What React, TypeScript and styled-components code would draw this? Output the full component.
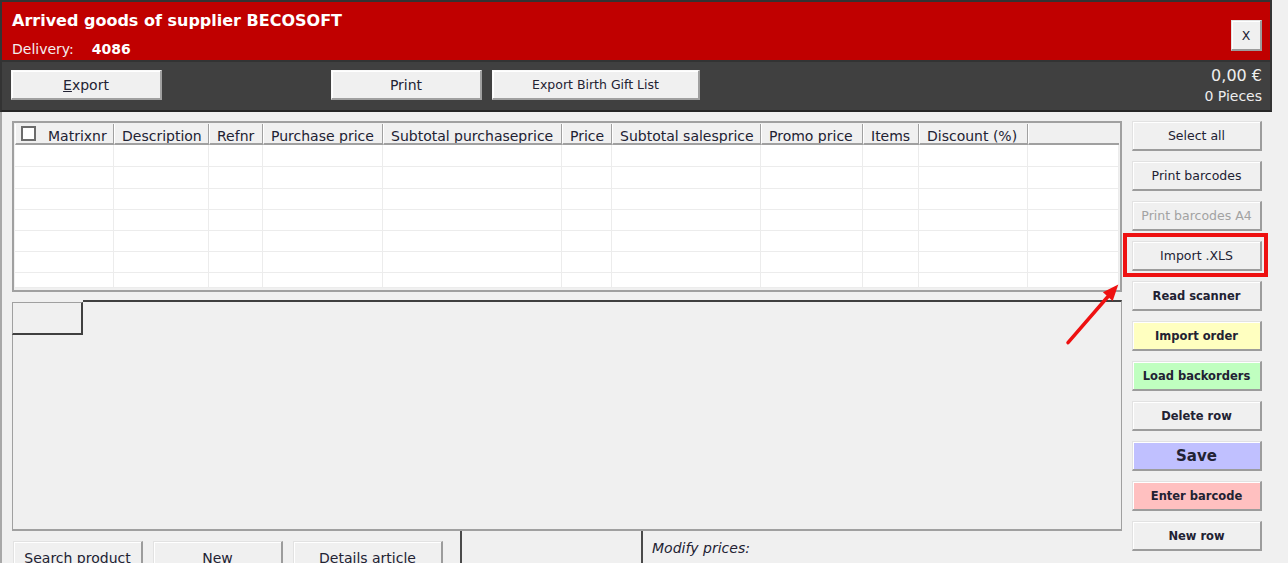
import styled, { createGlobalStyle, css } from "styled-components";

const GlobalStyle = createGlobalStyle`
  html, body {
    margin: 0;
    padding: 0;
    background: #f0f0f0;
    overflow: hidden;
  }
  body {
    font-family: "DejaVu Sans", Verdana, sans-serif;
    color: #222233;
  }
  * {
    box-sizing: border-box;
  }
`;

const Screen = styled.div`
  position: relative;
  width: 1288px;
  height: 563px;
  overflow: hidden;
  background: #f0f0f0;
`;

const Window = styled.div`
  width: 1272px;
  display: flex;
  flex-direction: column;
`;

/* ---------- title bar ---------- */

const TitleBar = styled.header`
  flex: none;
  height: 62px;
  background: #c00000;
  border: 2px solid #333333;
  padding: 9px 8px 0 10px;
  display: flex;
  justify-content: space-between;
  align-items: flex-start;
  color: #ffffff;
`;

const Title = styled.h1`
  margin: 0;
  font-size: 16px;
  line-height: 20px;
  font-weight: bold;
`;

const DeliveryLine = styled.div`
  margin-top: 10px;
  display: flex;
  gap: 18px;
  font-size: 14px;
  line-height: 17px;
  color: #f4eeee;
  & > b {
    color: #ffffff;
  }
`;

const bevel = css`
  background: #f0f0f0;
  border-style: solid;
  border-width: 1px 2px 2px 1px;
  border-color: #e2e2e2 #9c9c9c #9c9c9c #e2e2e2;
  box-shadow: inset 1px 1px 0 #ffffff;
  padding: 0;
  font-family: inherit;
  color: #222233;
  cursor: default;
  white-space: nowrap;
`;

const CloseButton = styled.button`
  ${bevel};
  width: 31px;
  height: 31px;
  margin-top: 9px;
  font-size: 12.5px;
`;

/* ---------- toolbar ---------- */

const Toolbar = styled.div`
  flex: none;
  height: 50px;
  background: #404040;
  border-left: 2px solid #333333;
  border-right: 2px solid #333333;
  border-bottom: 2px solid #262626;
  padding: 0 8px 0 9px;
  display: flex;
  align-items: flex-start;
`;

const ToolButton = styled.button<{ $width: number; $gap?: number; $small?: boolean }>`
  ${bevel};
  border-color: #fafafa #a0a0a0 #a0a0a0 #fafafa;
  width: ${(p) => p.$width}px;
  height: 30px;
  margin-top: 8px;
  margin-left: ${(p) => p.$gap ?? 0}px;
  font-size: ${(p) => (p.$small ? 12.5 : 14)}px;
`;

const Totals = styled.div`
  margin-left: auto;
  margin-top: 4px;
  text-align: right;
  color: #eeeeee;
  & > div:first-child {
    font-size: 16px;
    line-height: 19px;
  }
  & > div:last-child {
    margin-top: 3px;
    font-size: 14px;
    line-height: 17px;
  }
`;

/* ---------- body ---------- */

const Body = styled.div`
  flex: none;
  border-left: 2px solid #a8a8a8;
  padding: 9px 10px 0 10px;
  display: flex;
  align-items: flex-start;
`;

const MainColumn = styled.div`
  width: 1110px;
  display: flex;
  flex-direction: column;
  & > * {
    flex: none;
  }
`;

const SideColumn = styled.div`
  width: 130px;
  margin-left: 10px;
  display: flex;
  flex-direction: column;
  gap: 10px;
`;

/* ---------- grid ---------- */

const columns = [
  { label: "Matrixnr", width: 99 },
  { label: "Description", width: 95 },
  { label: "Refnr", width: 54 },
  { label: "Purchase price", width: 120 },
  { label: "Subtotal purchaseprice", width: 179 },
  { label: "Price", width: 50 },
  { label: "Subtotal salesprice", width: 149 },
  { label: "Promo price", width: 102 },
  { label: "Items", width: 56 },
  { label: "Discount (%)", width: 109 },
  { label: "", width: 91 },
];
const template = columns.map((c) => `${c.width}px`).join(" ");
const rowHeights = [22, 22, 21, 21, 21, 21, 15];

const GridFrame = styled.div`
  height: 171px;
  border: 2px solid #a0a0a0;
  padding: 1px 1px 2px 1px;
  background: #f0f0f0;
`;

const HeaderRow = styled.div`
  display: grid;
  grid-template-columns: ${template};
  height: 21px;
`;

const HeaderCell = styled.div<{ $first?: boolean; $last?: boolean }>`
  display: flex;
  align-items: flex-start;
  gap: 12px;
  padding: ${(p) => (p.$first ? "2px 0 0 5px" : "4px 0 0 7px")};
  border-left: 1px solid #ffffff;
  border-right: ${(p) => (p.$last ? "none" : "1px solid #a0a0a0")};
  border-bottom: 2px solid #a0a0a0;
  font-size: 14px;
  line-height: 16px;
  white-space: nowrap;
  overflow: hidden;
  & > span {
    padding-top: ${(p) => (p.$first ? 2 : 0)}px;
  }
`;

const CheckBox = styled.span`
  flex: none;
  width: 15px;
  height: 15px;
  background: #ffffff;
  border: 2px solid #6c6c6c;
`;

const GridBody = styled.div`
  display: grid;
  grid-template-columns: ${template};
  grid-template-rows: ${rowHeights.map((h) => `${h}px`).join(" ")};
  height: 143px;
  background: #ffffff;
`;

const BodyCell = styled.div`
  border-right: 1px solid #ececec;
  border-bottom: 1px solid #ececec;
`;

/* ---------- tab panel ---------- */

const Panel = styled.div`
  margin-top: 8px;
  height: 231px;
  display: flex;
  flex-direction: column;
`;

const TabRow = styled.div`
  display: flex;
  height: 35px;
`;

const Tab = styled.div`
  width: 71px;
  height: 33px;
  margin-top: 2px;
  background: #f0f0f0;
  border-top: 1px solid #a0a0a0;
  border-left: 1px solid #a0a0a0;
  border-right: 2px solid #404040;
  border-bottom: 2px solid #404040;
`;

const TabLine = styled.div`
  flex: 1;
  border-top: 2px solid #404040;
  border-right: 1px solid #a0a0a0;
`;

const PanelBody = styled.div`
  flex: 1;
  border-left: 1px solid #a0a0a0;
  border-right: 1px solid #a0a0a0;
  border-bottom: 2px solid #a0a0a0;
`;

/* ---------- footer ---------- */

const FooterRow = styled.div`
  display: flex;
  height: 40px;
`;

const FooterButtons = styled.div`
  width: 448px;
  padding: 10px 0 0 1px;
  display: flex;
  align-items: flex-start;
  gap: 10px;
`;

const FooterButton = styled.button<{ $width: number }>`
  ${bevel};
  flex: none;
  width: ${(p) => p.$width}px;
  height: 35px;
  font-size: 14px;
`;

const Divider = styled.div`
  width: 2px;
  background: #4a4a4a;
`;

const FooterCell = styled.div<{ $width?: number }>`
  width: ${(p) => (p.$width ? `${p.$width}px` : "auto")};
  flex: ${(p) => (p.$width ? "none" : 1)};
  padding: 9px 0 0 9px;
  font-size: 14px;
  line-height: 17px;
  font-style: italic;
`;

/* ---------- side buttons ---------- */

const SideButton = styled.button<{ $tone?: string; $bold?: boolean; $big?: boolean; $muted?: boolean }>`
  ${bevel};
  width: 130px;
  height: 30px;
  background: ${(p) => p.$tone ?? "#f0f0f0"};
  font-size: ${(p) => (p.$big ? 15 : p.$bold ? 11.5 : 12.5)}px;
  font-weight: ${(p) => (p.$bold ? "bold" : "normal")};
  color: ${(p) => (p.$muted ? "#a2a2a2" : "#222233")};
`;

const HighlightWrap = styled.div`
  position: relative;
  height: 30px;
`;

const Highlight = styled.span`
  position: absolute;
  top: -8px;
  left: -9px;
  right: -6px;
  bottom: -6px;
  border: 4px solid #ee1111;
  pointer-events: none;
`;

const Arrow = styled.svg`
  position: absolute;
  left: 1058px;
  top: 276px;
  width: 70px;
  height: 75px;
  pointer-events: none;
`;

const sideButtons = [
  { label: "Select all" },
  { label: "Print barcodes" },
  { label: "Print barcodes A4", muted: true },
  { label: "Import .XLS", highlight: true },
  { label: "Read scanner", bold: true },
  { label: "Import order", bold: true, tone: "#ffffc0" },
  { label: "Load backorders", bold: true, tone: "#c0ffc0" },
  { label: "Delete row", bold: true },
  { label: "Save", bold: true, big: true, tone: "#c0c0ff" },
  { label: "Enter barcode", bold: true, tone: "#ffc0c0" },
  { label: "New row", bold: true },
];

export default function App() {
  return (
    <Screen>
      <GlobalStyle />
      <Window>
        <TitleBar>
          <div>
            <Title>Arrived goods of supplier BECOSOFT</Title>
            <DeliveryLine>
              <span>Delivery:</span>
              <b>4086</b>
            </DeliveryLine>
          </div>
          <CloseButton>X</CloseButton>
        </TitleBar>

        <Toolbar>
          <ToolButton $width={151}>
            <u>E</u>xport
          </ToolButton>
          <ToolButton $width={151} $gap={169}>
            Print
          </ToolButton>
          <ToolButton $width={208} $gap={10} $small>
            Export Birth Gift List
          </ToolButton>
          <Totals>
            <div>0,00 €</div>
            <div>0 Pieces</div>
          </Totals>
        </Toolbar>

        <Body>
          <MainColumn>
            <GridFrame>
              <HeaderRow>
                {columns.map((c, i) => (
                  <HeaderCell key={i} $first={i === 0} $last={i === columns.length - 1}>
                    {i === 0 && <CheckBox />}
                    <span>{c.label}</span>
                  </HeaderCell>
                ))}
              </HeaderRow>
              <GridBody>
                {rowHeights.map((_, r) =>
                  columns.map((_, c) => <BodyCell key={`${r}-${c}`} />)
                )}
              </GridBody>
            </GridFrame>

            <Panel>
              <TabRow>
                <Tab />
                <TabLine />
              </TabRow>
              <PanelBody />
            </Panel>

            <FooterRow>
              <FooterButtons>
                <FooterButton $width={130}>Search product</FooterButton>
                <FooterButton $width={130}>New</FooterButton>
                <FooterButton $width={150}>Details article</FooterButton>
              </FooterButtons>
              <Divider />
              <FooterCell $width={179} />
              <Divider />
              <FooterCell>Modify prices:</FooterCell>
            </FooterRow>
          </MainColumn>

          <SideColumn>
            {sideButtons.map((b) =>
              b.highlight ? (
                <HighlightWrap key={b.label}>
                  <SideButton>{b.label}</SideButton>
                  <Highlight />
                </HighlightWrap>
              ) : (
                <SideButton
                  key={b.label}
                  $tone={b.tone}
                  $bold={b.bold}
                  $big={b.big}
                  $muted={b.muted}
                >
                  {b.label}
                </SideButton>
              )
            )}
          </SideColumn>
        </Body>
      </Window>

      <Arrow viewBox="0 0 70 75">
        <line x1="10" y1="66.7" x2="50" y2="20.5" stroke="#ee1111" strokeWidth="3.5" strokeLinecap="round" />
        <polygon points="60.3,8.5 54.7,24.9 44.9,16.3" fill="#ee1111" />
      </Arrow>
    </Screen>
  );
}
